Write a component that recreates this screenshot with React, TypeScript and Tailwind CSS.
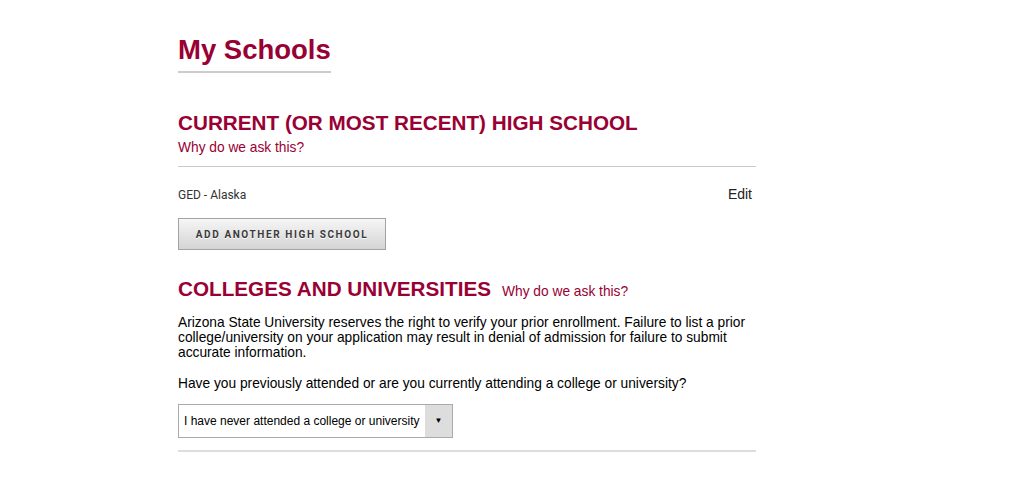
export default function App() {
  return (
    <div className="min-h-screen w-full bg-white font-['Liberation_Sans',Arial,sans-serif]">
      <div className="ml-[178px] w-[578px] pt-[32px]">
        <h1 className="inline-block border-b-2 border-[#cccccc] pb-[3px] text-[27.5px] font-bold leading-[36px] text-[#990033]">
          My Schools
        </h1>

        <h2 className="mt-[38px] text-[20.7px] font-bold leading-[24px] text-[#990033]">
          CURRENT (OR MOST RECENT) HIGH SCHOOL
        </h2>
        <a href="#" className="mt-[4px] block text-[13.75px] leading-[18px] text-[#990033]">
          Why do we ask this?
        </a>
        <div className="mt-[9px] h-px bg-[#c8c8c8]" />

        <div className="mt-[19px] flex items-baseline justify-between pr-[4px]">
          <span className="font-['Roboto',sans-serif] text-[12px] leading-[16px] text-[#333333]">GED - Alaska</span>
          <a href="#" className="text-[14px] leading-[16px] text-[#222222]">
            Edit
          </a>
        </div>

        <button className="mt-[15px] h-[32px] w-[208px] border border-[#a3a3a3] bg-gradient-to-b from-[#f6f6f6] to-[#d4d4d4] font-['Roboto',sans-serif] text-[10px] font-bold tracking-[1.6px] text-[#3a3a3a] [text-shadow:0_1px_0_#ffffff]">
          ADD ANOTHER HIGH SCHOOL
        </button>

        <div className="mt-[27px] flex items-baseline gap-[11px]">
          <h2 className="text-[20.7px] font-bold leading-[24px] text-[#990033]">COLLEGES AND UNIVERSITIES</h2>
          <a href="#" className="text-[13.75px] leading-[18px] text-[#990033]">
            Why do we ask this?
          </a>
        </div>

        <p className="mt-[14px] text-[13.75px] leading-[15px] text-black">
          Arizona State University reserves the right to verify your prior enrollment. Failure to list a prior
          college/university on your application may result in denial of admission for failure to submit accurate
          information.
        </p>

        <p className="mt-[16px] text-[13.75px] leading-[15px] text-black">
          Have you previously attended or are you currently attending a college or university?
        </p>

        <div className="mt-[13px] flex h-[34px] w-[275px] items-stretch border border-[#aaaaaa] bg-white">
          <span className="flex flex-1 items-center whitespace-nowrap pl-[5px] text-[12px] text-black">
            I have never attended a college or university
          </span>
          <span className="flex w-[27px] items-center justify-center bg-[#dddddd] text-[8px] text-black">▼</span>
        </div>

        <div className="mt-[12px] h-[2px] bg-[#dddddd]" />
      </div>
    </div>
  )
}
